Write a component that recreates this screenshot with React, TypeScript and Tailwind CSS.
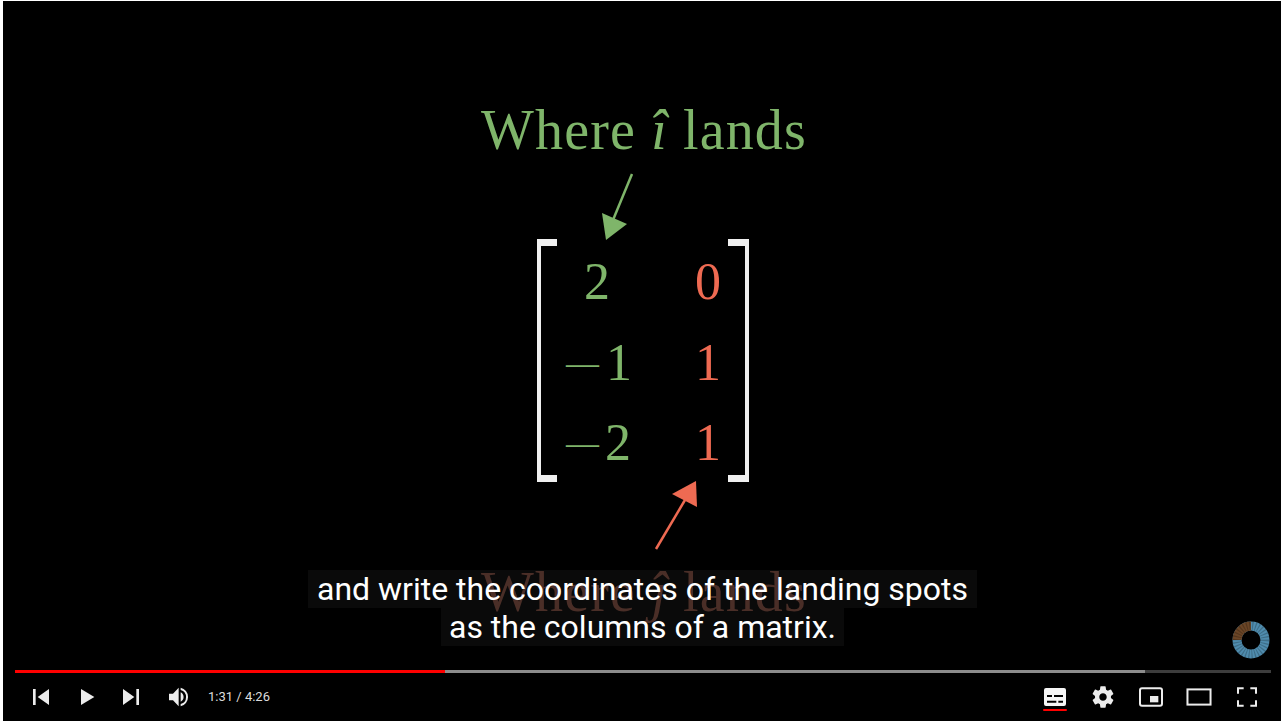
const mathFont = 'font-["Liberation_Serif",serif]';
const green = 'text-[#7fb56a]';
const red = 'text-[#ee6a52]';

function Icon({ children }: { children: React.ReactNode }) {
  return (
    <svg viewBox="0 0 36 36" className="h-12 w-12 shrink-0" fill="#ececec">
      {children}
    </svg>
  );
}

function Matrix() {
  const cell = `${mathFont} absolute flex items-center text-[52px] leading-none`;
  const dash = 'w-[33px] text-[33px] font-light';
  return (
    <div className="absolute left-[535px] top-[239px] h-[244px] w-[216px]">
      <div className="absolute left-[2px] top-0 h-[243px] w-[20px] border-y-[7px] border-l-[4px] border-[#f0f0f0]" />
      <div className="absolute right-[2px] top-0 h-[243px] w-[21px] border-y-[7px] border-r-[4px] border-[#f0f0f0]" />
      <span className={`${cell} ${green} left-[49px] top-[17px]`}>2</span>
      <span className={`${cell} ${red} left-[160px] top-[17px]`}>0</span>
      <span className={`${cell} ${green} left-[31px] top-[98px]`}>
        <span className={`${dash} mr-[7px]`}>—</span>1
      </span>
      <span className={`${cell} ${red} left-[160px] top-[98px]`}>1</span>
      <span className={`${cell} ${green} left-[31px] top-[178px]`}>
        <span className={`${dash} mr-[6px]`}>—</span>2
      </span>
      <span className={`${cell} ${red} left-[160px] top-[178px]`}>1</span>
    </div>
  );
}

function ChannelMark() {
  return (
    <svg viewBox="0 0 38 38" className="absolute left-[1232px] top-[621px] h-[38px] w-[38px]">
      <circle cx="19" cy="19" r="14" fill="none" stroke="#4f8cae" strokeWidth="9" />
      <path d="M5 19A14 14 0 0 1 19 5" fill="none" stroke="#6a4526" strokeWidth="9" />
      <circle cx="19" cy="19" r="14" fill="none" stroke="#000" strokeOpacity="0.22" strokeWidth="9" strokeDasharray="1.1 1.8" />
    </svg>
  );
}

export default function App() {
  return (
    <div className="h-[721px] w-[1281px] overflow-hidden bg-white pl-[3px] pt-px font-['Roboto',sans-serif]">
      <div className="relative flex h-[720px] w-[1278px] flex-col justify-end overflow-hidden bg-black">
        {/* video frame, coords are page coords so shifted back by the 3px/1px offset */}
        <div className="absolute -left-[3px] -top-px h-[721px] w-[1281px]">
          <div className={`${mathFont} ${green} absolute left-[481px] top-[102px] whitespace-nowrap text-[56px] leading-none tracking-[1.15px]`}>
            Where <i>î</i> lands
          </div>
          <svg className="absolute left-0 top-0" width="1281" height="721">
            <path d="M632 174 613 220" stroke="#7fb56a" strokeWidth="2.5" />
            <path d="M602 213 627 224 606 240z" fill="#7fb56a" />
            <path d="M656 549 685 500" stroke="#ee6a52" strokeWidth="2.5" />
            <path d="M672 494 696 481 697 507z" fill="#ee6a52" />
          </svg>
          <Matrix />
          <div className={`${mathFont} absolute left-[481px] top-[564px] whitespace-nowrap text-[56px] leading-none tracking-[1.15px] text-[#43261f]`}>
            Where <i>ĵ</i> lands
          </div>
          <div className="absolute left-[2px] top-[570px] flex w-full flex-col items-center text-[32px] leading-[38px] text-white">
            <span className="bg-white/[0.04] px-[9px]">and write the coordinates of the landing spots</span>
            <span className="bg-white/[0.04] px-[8px]">as the columns of a matrix.</span>
          </div>
          <ChannelMark />
        </div>

        <div className="relative pl-3 pr-[10px]">
          <div className="flex h-[3px] bg-[#3d3d3d]">
            <div className="h-full w-[430px] bg-[#f00]" />
            <div className="h-full w-[700px] bg-[#8c8c8c]" />
          </div>
          <div className="flex h-[48px] items-center">
            <div className="ml-[2px]">
              <Icon><path d="M12 12h2v12h-2z M15.5 18 24 24V12z" /></Icon>
            </div>
            <div className="ml-[-2px]">
              <Icon><path d="M13.500 12v12l10-6z" /></Icon>
            </div>
            <div className="ml-[-4px]">
              <Icon><path d="M12 24l8.500-6L12 12z M22 12h2v12h-2z" /></Icon>
            </div>
            <div className="ml-[-1px]">
              <Icon>
                <path d="M11.250 15.500h3L18.500 11v14l-4.250-4.500h-3z M20 14.500v7a3.900 3.900 0 0 0 0-7z M20 11v1.700a5.500 5.500 0 0 1 0 10.600V25a7.200 7.200 0 0 0 0-14z" />
              </Icon>
            </div>
            <span className="ml-[6px] text-[13px] text-[#dddddd]">1:31 / 4:26</span>
            <div className="ml-auto flex items-center">
              <div className="relative h-12">
                <Icon>
                  <path fillRule="evenodd" d="M11.250 11.250h13.500a1.500 1.500 0 0 1 1.500 1.500v10.500a1.500 1.500 0 0 1-1.500 1.500h-13.500a1.500 1.500 0 0 1-1.500-1.500v-10.500a1.500 1.500 0 0 1 1.500-1.500z M12 16.500h3.750V18H12z M17.250 16.500H24V18h-6.750z M12 20.800h7v1.500h-7z M20.500 20.800H24v1.500h-3.500z" fill="#f5f5f5" />
                </Icon>
                <div className="absolute bottom-[10px] left-[12px] h-[2px] w-6 rounded-sm bg-[#f00]" />
              </div>
              <Icon>
                <path fillRule="evenodd" d="m23.940 18.780c.03-.25.05-.51.05-.78 0-.27-.02-.52-.05-.78l1.680-1.320c.15-.12.19-.33.09-.51l-1.600-2.760c-.09-.17-.31-.24-.48-.17l-1.990.8c-.41-.32-.86-.58-1.350-.78l-.30-2.120c-.02-.19-.19-.33-.39-.33h-3.200c-.2 0-.36.14-.39.33l-.30 2.120c-.48.2-.93.47-1.350.78l-1.990-.8c-.18-.07-.39 0-.48.17l-1.600 2.760c-.10.17-.05.39.09.51l1.680 1.320c-.03.25-.05.52-.05.78 0 .26.02.52.05.78l-1.680 1.320c-.15.12-.19.33-.09.51l1.600 2.760c.09.17.31.24.48.17l1.990-.8c.41.32.86.58 1.350.78l.30 2.120c.02.19.19.33.39.33h3.200c.2 0 .36-.14.39-.33l.30-2.120c.48-.2.93-.47 1.350-.78l1.990.8c.18.07.39 0 .48-.17l1.600-2.760c.09-.17.05-.39-.09-.51l-1.680-1.320z M18 20.790c-1.540 0-2.800-1.250-2.800-2.800 0-1.540 1.250-2.800 2.800-2.800 1.540 0 2.800 1.250 2.800 2.800 0 1.540-1.250 2.800-2.800 2.800z" />
              </Icon>
              <Icon>
                <rect x="9.750" y="11.400" width="16.500" height="13.200" rx="1.500" fill="none" stroke="#ececec" strokeWidth="1.500" />
                <rect x="17.250" y="17.250" width="6.250" height="4.750" />
              </Icon>
              <Icon>
                <rect x="9.350" y="12.300" width="17.300" height="11.400" fill="none" stroke="#ececec" strokeWidth="1.500" />
              </Icon>
              <Icon>
                <path d="M10.500 15.500v-4.800h5v1.500H12v3.300z M20.500 10.700h5v4.800H24v-3.300h-3.500z M10.500 20.500H12v3.300h3.500v1.500h-5z M24 20.500h1.500v4.800h-5v-1.500H24z" />
              </Icon>
            </div>
          </div>
        </div>
      </div>
    </div>
  );
}
